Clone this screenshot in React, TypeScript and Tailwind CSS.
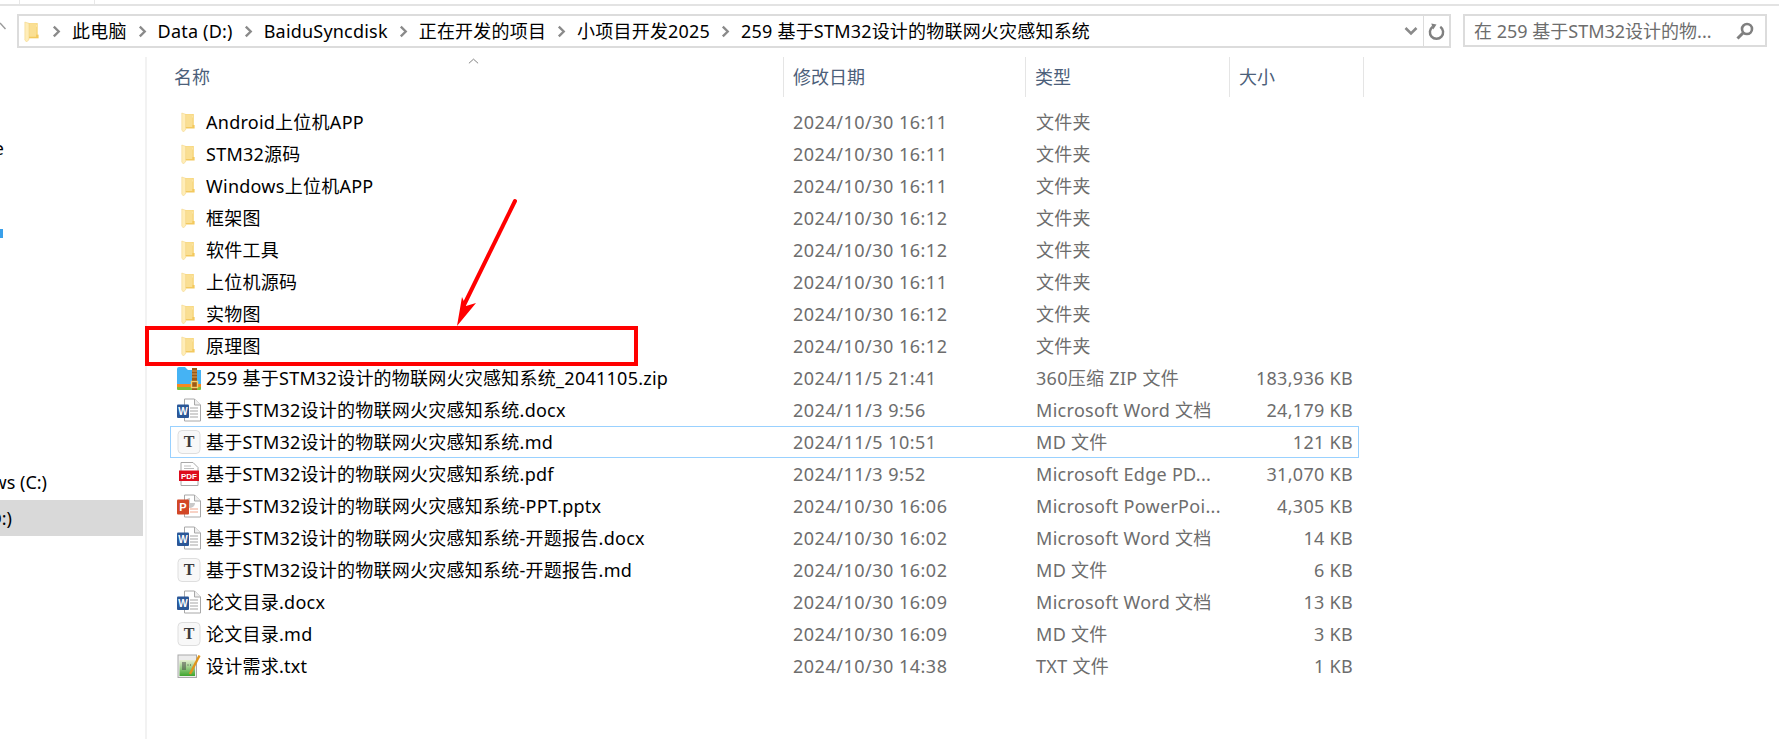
import type { ReactNode } from 'react';

const font = 'font-["Noto_Sans","Noto_Sans_CJK_SC",sans-serif]';

function FolderIcon({ className = 'w-[14px] h-[20px] mr-[2px]' }: { className?: string }) {
  return (
    <svg viewBox="0 0 18 20" preserveAspectRatio="none" className={className}>
      <path d="M4 2h12.5v14H4z" fill="#f7d77e" />
      <path d="M6 3.5h9.5v2H6z" fill="#fbe7ae" />
      <path d="M6 13h11.5v3.5H6z" fill="#f3c95e" />
      <path d="M5 2.5h9.5V15H5z" fill="#fadf93" />
      <path d="M1 1l5 1.2v15.6L3 20l-2-2z" fill="#ffedb8" stroke="#eecd74" strokeWidth="0.5" />
    </svg>
  );
}

function WordIcon() {
  return (
    <svg viewBox="0 0 24 24" className="w-[24px] h-[24px]">
      <path d="M7.5 1h10l6 6v16h-16z" fill="#fff" stroke="#a8a8a8" />
      <path d="M17.5 1v6h6" fill="#eee" stroke="#a8a8a8" />
      <path d="M13 10h8M13 13h8M13 16h8M13 19h8" stroke="#a5a5a5" />
      <rect x="0" y="6.5" width="12" height="13.5" rx="1" fill="#2b5797" />
      <text x="6" y="17" fontSize="10" fontWeight="700" textAnchor="middle" fill="#fff" fontFamily="Liberation Sans">W</text>
    </svg>
  );
}

function PptIcon() {
  return (
    <svg viewBox="0 0 24 24" className="w-[24px] h-[24px]">
      <path d="M7.5 1h10l6 6v16h-16z" fill="#fff" stroke="#a8a8a8" />
      <path d="M17.5 1v6h6" fill="#eee" stroke="#a8a8a8" />
      <path d="M13 4a5 5 0 1 0 5 5h-5z" fill="#c9c9c9" />
      <path d="M13 15h8M13 18h8" stroke="#f0a58c" />
      <rect x="0" y="5.5" width="12" height="15" rx="1" fill="#d24726" />
      <text x="6" y="17" fontSize="11" fontWeight="700" textAnchor="middle" fill="#fff" fontFamily="Liberation Sans">P</text>
    </svg>
  );
}

function PdfIcon() {
  return (
    <svg viewBox="0 0 24 24" className="w-[24px] h-[24px]">
      <path d="M4 0.5h12l5 5v18H4z" fill="#fff" stroke="#a8a8a8" />
      <path d="M7 4h7M7 6.5h10" stroke="#bdbdbd" />
      <rect x="2" y="8.5" width="20" height="10.5" fill="#dd0b1c" />
      <text x="12" y="17" fontSize="8" fontWeight="700" textAnchor="middle" fill="#fff" fontFamily="Liberation Sans">PDF</text>
    </svg>
  );
}

function MdIcon() {
  return (
    <svg viewBox="0 0 24 24" className="w-[24px] h-[24px]">
      <rect x="1" y="0.5" width="22" height="23" rx="4" fill="#f8f8f8" stroke="#dedede" />
      <text x="12" y="17" fontSize="16" fontWeight="700" textAnchor="middle" fill="#3b3b3b" fontFamily="Liberation Serif">T</text>
    </svg>
  );
}

function ZipIcon() {
  return (
    <svg viewBox="0 0 24 24" className="w-[24px] h-[24px]">
      <path d="M0 3a2 2 0 0 1 2-2h6l3 3h13v15H0z" fill="#45b3f4" />
      <path d="M0 18h24v3.5H0z" fill="#f58a1f" />
      <path d="M0 21h24v2a1 1 0 0 1-1 1H1a1 1 0 0 1-1-1z" fill="#7cbf3b" />
      <rect x="15" y="2" width="5" height="22" fill="#9c5a17" />
      <path d="M15 5h5M15 8h5M15 11h5" stroke="#d9a15c" />
      <rect x="14.5" y="15.5" width="6" height="6" fill="none" stroke="#f4cf6e" strokeWidth="1.4" />
    </svg>
  );
}

function TxtIcon() {
  return (
    <svg viewBox="0 0 24 24" className="w-[24px] h-[24px]">
      <rect x="1" y="1" width="18.5" height="22.5" fill="#ececec" stroke="#a9a9a9" />
      <defs>
        <linearGradient id="txtGreen" x1="0" y1="0" x2="0" y2="1">
          <stop offset="0" stopColor="#e6f0d2" />
          <stop offset="1" stopColor="#3fa52e" />
        </linearGradient>
      </defs>
      <rect x="2.5" y="6" width="15.5" height="16" fill="url(#txtGreen)" />
      <path d="M6 8v8M8 8v8M10.5 11h1M13 11h1" stroke="#444" strokeWidth="1" />
      <path d="M13 20 22.5 1.5" stroke="#e0951c" strokeWidth="2.4" />
    </svg>
  );
}

const chevron = (
  <svg viewBox="0 0 10 14" className="w-[9px] h-[13px] shrink-0">
    <path d="M2 1.5 7.5 7 2 12.5" fill="none" stroke="#8a8a8a" strokeWidth="2.6" />
  </svg>
);

type Row = { icon: ReactNode; name: string; date: string; type: string; size?: string; selected?: boolean };

const folder = <FolderIcon />;

const rows: Row[] = [
  { icon: folder, name: 'Android上位机APP', date: '2024/10/30 16:11', type: '文件夹' },
  { icon: folder, name: 'STM32源码', date: '2024/10/30 16:11', type: '文件夹' },
  { icon: folder, name: 'Windows上位机APP', date: '2024/10/30 16:11', type: '文件夹' },
  { icon: folder, name: '框架图', date: '2024/10/30 16:12', type: '文件夹' },
  { icon: folder, name: '软件工具', date: '2024/10/30 16:12', type: '文件夹' },
  { icon: folder, name: '上位机源码', date: '2024/10/30 16:11', type: '文件夹' },
  { icon: folder, name: '实物图', date: '2024/10/30 16:12', type: '文件夹' },
  { icon: folder, name: '原理图', date: '2024/10/30 16:12', type: '文件夹' },
  { icon: <ZipIcon />, name: '259 基于STM32设计的物联网火灾感知系统_2041105.zip', date: '2024/11/5 21:41', type: '360压缩 ZIP 文件', size: '183,936 KB' },
  { icon: <WordIcon />, name: '基于STM32设计的物联网火灾感知系统.docx', date: '2024/11/3 9:56', type: 'Microsoft Word 文档', size: '24,179 KB' },
  { icon: <MdIcon />, name: '基于STM32设计的物联网火灾感知系统.md', date: '2024/11/5 10:51', type: 'MD 文件', size: '121 KB', selected: true },
  { icon: <PdfIcon />, name: '基于STM32设计的物联网火灾感知系统.pdf', date: '2024/11/3 9:52', type: 'Microsoft Edge PD...', size: '31,070 KB' },
  { icon: <PptIcon />, name: '基于STM32设计的物联网火灾感知系统-PPT.pptx', date: '2024/10/30 16:06', type: 'Microsoft PowerPoi...', size: '4,305 KB' },
  { icon: <WordIcon />, name: '基于STM32设计的物联网火灾感知系统-开题报告.docx', date: '2024/10/30 16:02', type: 'Microsoft Word 文档', size: '14 KB' },
  { icon: <MdIcon />, name: '基于STM32设计的物联网火灾感知系统-开题报告.md', date: '2024/10/30 16:02', type: 'MD 文件', size: '6 KB' },
  { icon: <WordIcon />, name: '论文目录.docx', date: '2024/10/30 16:09', type: 'Microsoft Word 文档', size: '13 KB' },
  { icon: <MdIcon />, name: '论文目录.md', date: '2024/10/30 16:09', type: 'MD 文件', size: '3 KB' },
  { icon: <TxtIcon />, name: '设计需求.txt', date: '2024/10/30 14:38', type: 'TXT 文件', size: '1 KB' },
];

const crumbs = ['此电脑', 'Data (D:)', 'BaiduSyncdisk', '正在开发的项目', '小项目开发2025', '259 基于STM32设计的物联网火灾感知系统'];

export default function App() {
  return (
    <div className={`relative w-[1779px] h-[739px] overflow-hidden bg-white text-[18px] leading-[24px] text-black ${font}`}>
      {/* tab strip remnant */}
      <div className="flex h-[6px] border-b-2 border-[#e3e3e3]">
        <div className="w-[20px] border-r border-[#e8e8e8]" />
        <div className="w-[75px] border-r border-[#e8e8e8]" />
      </div>

      {/* address row */}
      <div className="flex h-[51px] pt-[8px] items-start">
        <svg viewBox="0 0 6 12" className="w-[6px] h-[12px] mt-[8px] shrink-0">
          <path d="M0 1 5.5 7" fill="none" stroke="#9a9a9a" strokeWidth="1.4" />
        </svg>
        <div className="ml-[11px] w-[1434px] h-[34px] flex items-center border-2 border-[#dcdcdc]">
          <div className="flex items-center flex-1 min-w-0 pl-[5px]">
            <FolderIcon className="w-[15px] h-[21px]" />
            <div className="flex items-center ml-[13px] gap-[11px] whitespace-nowrap tracking-[0.2px]">
              {crumbs.map(c => (
                <div key={c} className="flex items-center gap-[11px]">
                  {chevron}
                  <span>{c}</span>
                </div>
              ))}
            </div>
          </div>
          <svg viewBox="0 0 14 10" className="w-[14px] h-[10px] mr-[5px]">
            <path d="M1.5 2 7 7.5 12.5 2" fill="none" stroke="#8a8a8a" strokeWidth="2.6" />
          </svg>
          <div className="w-[26px] h-full border-l border-[#dcdcdc] flex items-center justify-center">
            <svg viewBox="0 0 18 20" className="w-[17px] h-[19px]">
              <path d="M5 5a7 7 0 1 0 8 0" fill="none" stroke="#808080" strokeWidth="2.6" />
              <path d="M3.5 1.5 9 2.5 5.5 8z" fill="#808080" />
            </svg>
          </div>
        </div>
        <div className="ml-[12px] w-[304px] h-[33px] flex items-center border-2 border-[#dcdcdc] pl-[9px] pr-[11px] text-[#6d6d6d] justify-between whitespace-nowrap">
          <span>在 259 基于STM32设计的物...</span>
          <svg viewBox="0 0 18 18" className="w-[18px] h-[18px]">
            <circle cx="11" cy="7" r="5" fill="none" stroke="#808080" strokeWidth="2.6" />
            <path d="M7 11 1.5 16.5" stroke="#808080" strokeWidth="3" />
          </svg>
        </div>
      </div>

      <div className="flex h-[682px]">
        {/* clipped navigation pane */}
        <div className="w-[147px] shrink-0 border-r-2 border-[#f2f2f2] flex flex-col">
          <div className="mt-[79px] h-[24px] w-[4px] overflow-hidden flex justify-end whitespace-nowrap">OneDrive</div>
          <div className="mt-[61px] h-[24px] w-[4px] flex items-center">
            <div className="w-[3px] h-[9px] bg-[#3aa0ea]" />
          </div>
          <div className="mt-[225px] h-[24px] w-[47px] overflow-hidden flex justify-end whitespace-nowrap">Windows (C:)</div>
          <div className="mt-[6px] h-[36px] w-[143px] bg-[#d9d9d9] flex items-center">
            <div className="w-[12px] overflow-hidden flex justify-end whitespace-nowrap">Data (D:)</div>
          </div>
        </div>

        {/* file list */}
        <div className="flex-1 min-w-0">
          <div className="relative flex h-[40px] text-[#4c607a] whitespace-nowrap">
            <svg viewBox="0 0 12 6" className="absolute left-[321px] top-[1px] w-[11px] h-[6px]">
              <path d="M1 5.5 6 1l5 4.5" fill="none" stroke="#777" strokeWidth="1" />
            </svg>
            <div className="w-[637px] border-r border-[#e5e5e5] pl-[27px] pt-[8px]">名称</div>
            <div className="w-[242px] border-r border-[#e5e5e5] pl-[9px] pt-[8px]">修改日期</div>
            <div className="w-[204px] border-r border-[#e5e5e5] pl-[9px] pt-[8px]">类型</div>
            <div className="w-[134px] border-r border-[#e5e5e5] pl-[9px] pt-[8px]">大小</div>
          </div>

          <div className="mt-[9px] ml-[23px] w-[1189px] flex flex-col">
            {rows.map(r => (
              <div
                key={r.name}
                className={`grid grid-cols-[622px_243px_195px_1fr] h-[32px] items-center whitespace-nowrap border ${r.selected ? 'border-[#99d1ff]' : 'border-transparent'}`}
              >
                <div className="flex items-center">
                  <div className="w-[35px] h-[30px] flex items-center justify-center shrink-0">{r.icon}</div>
                  <span className="tracking-[0.25px]">{r.name}</span>
                </div>
                <div className="text-[#6d6d6d] tracking-[0.5px]">{r.date}</div>
                <div className="text-[#6d6d6d] tracking-[0.3px]">{r.type}</div>
                <div className="text-[#6d6d6d] text-right pr-[5px] tracking-[0.3px]">{r.size}</div>
              </div>
            ))}
          </div>
        </div>
      </div>

      {/* red annotation drawn over the list */}
      <div className="absolute left-[145px] top-[326px] w-[493px] h-[40px] border-[4px] border-[#ff0000]" />
      <svg className="absolute left-[450px] top-[195px] w-[72px] h-[135px]" viewBox="0 0 72 135">
        <path d="M65 6 13 112" stroke="#ff0000" strokeWidth="4" strokeLinecap="round" fill="none" />
        <path d="M7 131 12 102 16 111 26 108z" fill="#ff0000" />
      </svg>
    </div>
  );
}
